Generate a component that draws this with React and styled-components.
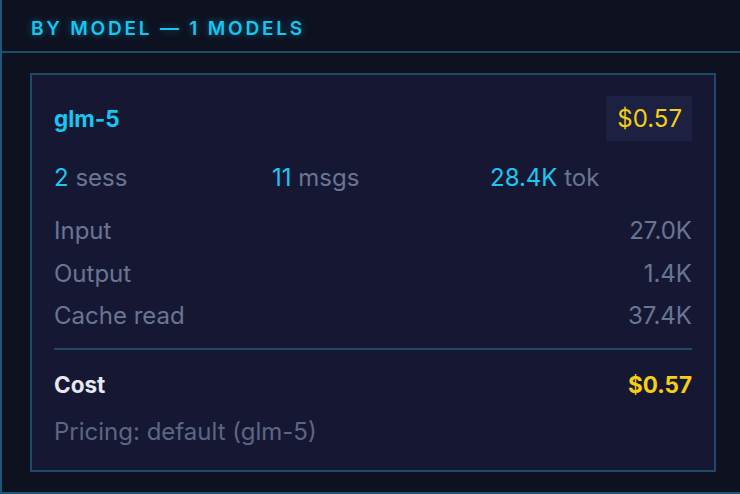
import React from 'react';
import styled, { createGlobalStyle } from "styled-components";

const GlobalStyle = createGlobalStyle`
  html, body {
    margin: 0;
    padding: 0;
    background: #0d1120;
  }
  body {
    font-family: Inter, "Noto Sans", "Liberation Sans", sans-serif;
    overflow: hidden;
  }
`;

const stats = [
  { value: "2", label: "sess" },
  { value: "11", label: "msgs" },
  { value: "28.4K", label: "tok" },
];

const metrics = [
  { label: "Input", value: "27.0K" },
  { label: "Output", value: "1.4K" },
  { label: "Cache read", value: "37.4K" },
];

function App() {
  return (
    <>
      <GlobalStyle />
      <Panel>
        <Header>
          <Title>By model — 1 models</Title>
        </Header>
        <Body>
          <Card>
            <CardHead>
              <ModelName>glm-5</ModelName>
              <Badge>$0.57</Badge>
            </CardHead>
            <Stats>
              {stats.map((s) => (
                <Stat key={s.label}>
                  <strong>{s.value}</strong> {s.label}
                </Stat>
              ))}
            </Stats>
            <Metrics>
              {metrics.map((m) => (
                <Metric key={m.label}>
                  <span>{m.label}</span>
                  <span>{m.value}</span>
                </Metric>
              ))}
            </Metrics>
            <Divider />
            <CostRow>
              <span>Cost</span>
              <Price>$0.57</Price>
            </CostRow>
            <Pricing>Pricing: default (glm-5)</Pricing>
          </Card>
        </Body>
      </Panel>
    </>
  );
}

const Panel = styled.section`
  width: 740px;
  height: 494px;
  box-sizing: border-box;
  border-left: 2px solid #1b5878;
  border-bottom: 2px solid #1b5878;
  background: #0d1120;
  display: flex;
  flex-direction: column;
`;

const Header = styled.header`
  height: 53px;
  border-bottom: 2px solid #1d4a66;
  display: flex;
  align-items: center;
  padding-left: 29px;
  padding-top: 7px;
  box-sizing: border-box;
`;

const Title = styled.h2`
  margin: 0;
  font-size: 19px;
  font-weight: 600;
  letter-spacing: 2.8px;
  text-transform: uppercase;
  color: #16c6f2;
  text-shadow: 0 0 8px rgba(22, 198, 242, 0.45);
`;

const Body = styled.div`
  padding: 20px 24px 20px 28px;
  flex: 1;
  display: flex;
`;

const Card = styled.div`
  flex: 1;
  background: #161833;
  border: 2px solid #1d4a66;
  padding: 21px 22px 23px 22px;
  display: flex;
  flex-direction: column;
  font-size: 24px;
  color: #6a7594;
`;

const CardHead = styled.div`
  display: flex;
  justify-content: space-between;
  align-items: center;
  height: 45px;
`;

const ModelName = styled.div`
  font-size: 22.5px;
  font-weight: 700;
  color: #17c6f2;
`;

const Badge = styled.div`
  background: #1c2142;
  color: #f5cf10;
  height: 45px;
  padding: 0 10px 0 11px;
  display: flex;
  align-items: center;
`;

const Stats = styled.div`
  display: grid;
  grid-template-columns: repeat(3, 1fr);
  gap: 16px;
  margin-top: 22px;
  line-height: 30px;
`;

const Stat = styled.div`
  strong {
    font-weight: 400;
    color: #1ec6f2;
  }
`;

const Metrics = styled.div`
  margin-top: 17px;
  display: flex;
  flex-direction: column;
`;

const Metric = styled.div`
  display: flex;
  justify-content: space-between;
  align-items: center;
  height: 42.5px;
`;

const Divider = styled.hr`
  margin: 11px 0 0;
  border: none;
  height: 2px;
  background: #1d4a66;
`;

const CostRow = styled.div`
  margin-top: 20px;
  display: flex;
  justify-content: space-between;
  line-height: 30px;
  font-size: 22.5px;
  font-weight: 700;
  color: #e6e7ef;
`;

const Price = styled.span`
  color: #f5cf10;
`;

const Pricing = styled.div`
  margin-top: 17px;
  line-height: 30px;
  color: #5c6684;
`;

export default App
